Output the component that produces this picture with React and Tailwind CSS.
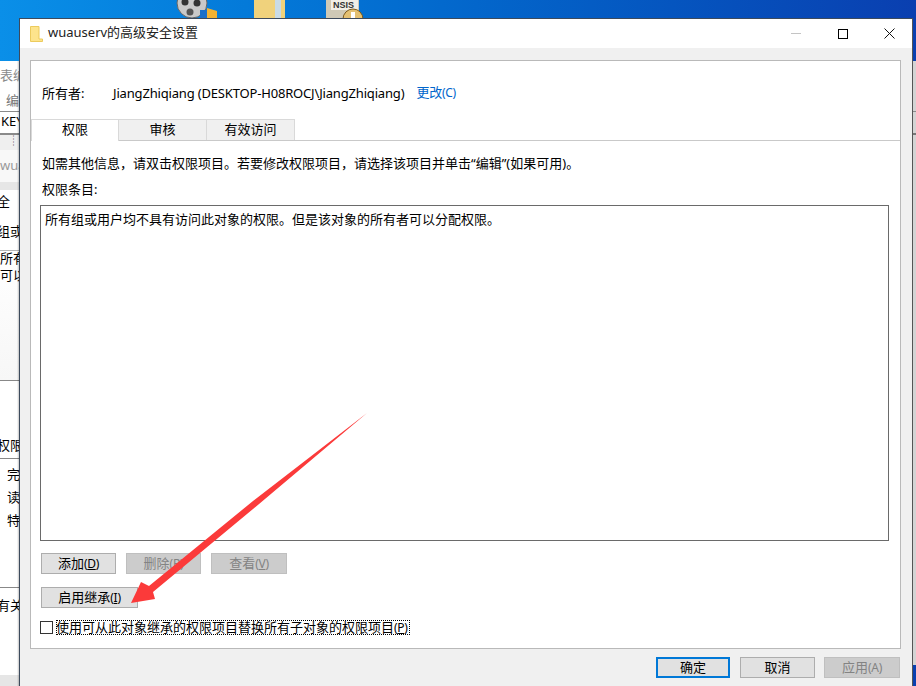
const cjk = { fontFamily: '"Noto Sans", "Noto Sans CJK SC", sans-serif' };

function Btn({ children, className = "", disabled = false }) {
  return (
    <div className={`flex items-center justify-center h-[21px] border text-[13px] leading-none ${disabled ? "bg-[#cccccc] border-[#bfbfbf] text-[#838383]" : "bg-[#e1e1e1] border-[#adadad] text-black"} ${className}`}>
      {children}
    </div>
  );
}

function Key({ k, plain = false }) {
  return (
    <span className="text-[12px] tracking-[-0.3px]">
      (<span className={plain ? "" : "underline underline-offset-1"}>{k}</span>)
    </span>
  );
}

function Tab({ children, active, className = "" }) {
  return (
    <div className={`flex items-center justify-center text-[13px] pb-px ${active ? "h-[22px] bg-white border-t border-l border-r border-[#d9d9d9] relative z-10 w-[88px] -mb-px" : "h-[21px] bg-[#f0f0f0] border-t border-r border-[#d9d9d9] w-[88px]"} ${className}`}>
      {children}
    </div>
  );
}

function BackWindow() {
  return (
    <div className="absolute left-0 top-[61px] w-[20px] h-[625px] bg-white text-[13px] leading-none overflow-hidden whitespace-nowrap text-black">
      <div className="h-[25px] pt-[8px] text-[#8a8a8a]">表编</div>
      <div className="h-[25px] pl-[6px] pt-[8px] text-[#777]">编</div>
      <div className="h-[24px] border-t border-b-2 border-[#8a8a8a] pl-[1px] pt-[3px]">KEY</div>
      <div className="h-[15px] bg-[#efefef] pl-[8px] text-[#555] text-[11px]">┊</div>
      <div className="h-[32px] pt-[9px] text-[#9a9a9a] bg-[#f8f8f8]">wua</div>
      <div className="h-[8px] bg-[#e6e6e6]"></div>
      <div className="h-[60px] flex flex-col justify-start pt-[5px] gap-[17px]">
        <div className="-ml-[3px]">全</div>
        <div className="-ml-[3px]">组或</div>
      </div>
      <div className="h-[130px] border-t border-[#b5b5b5] pt-[1px] flex flex-col gap-[4px] bg-gradient-to-b from-white to-[#f7f7f7]">
        <div>所有</div>
        <div>可以</div>
      </div>
      <div className="h-[78px] border-t border-[#888] pt-[58px]">
        <div className="-ml-[3px]">权限</div>
      </div>
      <div className="h-[129px] border-t border-[#888] pt-[9px] pl-[7px] flex flex-col gap-[10px]">
        <div>完</div>
        <div>读</div>
        <div>特</div>
      </div>
      <div className="h-[88px] border-t border-[#888] pt-[11px]">
        <div className="-ml-[3px]">有关</div>
      </div>
      <div className="h-[11px] bg-[#e6e6e6]"></div>
      <div className="absolute right-0 top-0 bottom-0 w-[3px] bg-gradient-to-r from-transparent to-[#00000055]"></div>
    </div>
  );
}

function DesktopIcons() {
  return (
    <svg className="absolute left-0 top-0" width="400" height="20" viewBox="0 0 400 20">
      <circle cx="192" cy="3" r="15" fill="#c9c9c9" stroke="#666" strokeWidth="1" />
      <circle cx="185" cy="2" r="3.5" fill="#333" />
      <circle cx="197" cy="3" r="3.5" fill="#333" />
      <circle cx="190" cy="12" r="3.5" fill="#555" />
      <rect x="200" y="10" width="7" height="8" fill="#1a6fc9" />
      <path d="M207 8L217 11V18H207Z" fill="#f2b233" />
      <rect x="254" y="0" width="31" height="18" fill="#f0d27c" />
      <rect x="275" y="0" width="6" height="18" fill="#c9dbe6" />
      <rect x="326" y="0" width="33" height="18" fill="#cfc9b6" />
      <rect x="331" y="0" width="27" height="10" fill="#f2efe6" />
      <text x="333" y="8" fontSize="9" fontWeight="700" fill="#333" fontFamily="Liberation Sans, sans-serif">NSIS</text>
      <circle cx="353" cy="19" r="10" fill="#e3c072" stroke="#7c5a1c" />
      <rect x="351" y="12" width="4" height="7" fill="#ffffff" />
    </svg>
  );
}

export default function App() {
  return (
    <div className="relative w-[916px] h-[686px] overflow-hidden bg-gradient-to-r from-[#0a8fe8] to-[#0a3fb0] text-black" style={cjk}>
      <DesktopIcons />
      <BackWindow />
      <div className="absolute right-0 top-[61px] w-[8px] h-[604px] bg-[#d4d4d4] flex flex-col">
        <div className="mt-[50px] h-px bg-[#8a8a8a]"></div>
        <div className="mt-[21px] h-[2px] bg-[#777]"></div>
      </div>
      <div className="absolute left-[19px] top-[18px] w-[894px] h-[668px] bg-[#f0f0f0] border-l border-r border-t border-[#3c4a5c] border-r-[#555] flex flex-col">
        <div className="h-[29px] bg-white flex items-center shrink-0">
          <svg className="ml-[10px]" width="13" height="16" viewBox="0 0 13 16">
            <path d="M0.5 0.5H9V13H12.5V15.5H0.5Z" fill="#fde48c" stroke="#eccb5d" />
          </svg>
          <span className="ml-[5px] pb-[2px] text-[13px] text-[#222]">wuauserv的高级安全设置</span>
          <div className="ml-auto flex items-center h-full">
            <div className="w-[46px] flex justify-center">
              <div className="w-[10px] h-px bg-[#c4c4c4]"></div>
            </div>
            <div className="w-[46px] flex justify-center ml-[1px]">
              <div className="w-[10px] h-[10px] border border-black"></div>
            </div>
            <div className="w-[46px] flex justify-center">
              <svg width="11" height="11" viewBox="0 0 11 11">
                <path d="M0.5 0.5L10.5 10.5M10.5 0.5L0.5 10.5" stroke="#111" strokeWidth="1" />
              </svg>
            </div>
          </div>
        </div>
        <div className="ml-[10px] mr-[11px] mt-[12px] h-[589px] bg-white border border-[#b9b9b9] flex flex-col shrink-0">
          <div className="h-[58px] flex items-end pb-[17px] pl-[11px] text-[13px] leading-[18px] whitespace-nowrap shrink-0">
            <span className="w-[71px]">所有者:</span>
            <span className="tracking-[-0.17px]">JiangZhiqiang (DESKTOP-H08ROCJ\JiangZhiqiang)</span>
            <span className="ml-[12px] text-[#0066cc] tracking-[-0.2px]">更改<span className="text-[12px] tracking-[-0.3px]">(C)</span></span>
          </div>
          <div className="flex items-end border-b border-[#c9c9c9] h-[22px] shrink-0">
            <Tab active>权限</Tab>
            <Tab>审核</Tab>
            <Tab className="border-l-0">有效访问</Tab>
          </div>
          <div className="pl-[11px] mt-[13px] text-[13px] leading-[18px] whitespace-nowrap">
            如需其他信息，请双击权限项目。若要修改权限项目，请选择该项目并单击“编辑”(如果可用)。
          </div>
          <div className="pl-[11px] mt-[8px] text-[13px] leading-[18px]">权限条目:</div>
          <div className="ml-[9px] mr-[11px] mt-[7px] h-[336px] border border-[#6a6a6a] px-[4px] pt-[4px] text-[13px] leading-[18px] shrink-0">
            所有组或用户均不具有访问此对象的权限。但是该对象的所有者可以分配权限。
          </div>
          <div className="flex gap-[10px] ml-[10px] mt-[12px]">
            <Btn className="w-[75px]">添加<Key k="D" /></Btn>
            <Btn disabled className="w-[75px]">删除<Key k="R" /></Btn>
            <Btn disabled className="w-[76px]">查看<Key k="V" /></Btn>
          </div>
          <Btn className="ml-[10px] mt-[13px] w-[97px]">启用继承<Key k="I" /></Btn>
          <div className="flex items-center ml-[9px] mt-[12px]">
            <div className="w-[13px] h-[13px] border border-[#333] bg-white"></div>
            <div className="ml-[3px] h-[15px] w-[354px] border border-dotted border-black flex items-center text-[13px] whitespace-nowrap">
              <span className="-ml-[1px]">使用可从此对象继承的权限项目替换所有子对象的权限项目<Key k="P" /></span>
            </div>
          </div>
        </div>
        <div className="flex mt-[8px] ml-[636px]">
          <Btn className="w-[74px] !border-2 !border-[#0078d7]">确定</Btn>
          <Btn className="w-[75px] ml-[10px]">取消</Btn>
          <Btn disabled className="w-[76px] ml-[9px]">应用<Key k="A" plain /></Btn>
        </div>
      </div>
      <svg className="absolute left-[120px] top-[400px] pointer-events-none" width="260" height="220" viewBox="0 0 260 220">
        <path d="M247 13L133 101L29 186L21 182L11 203L35 199L33 192L133 109Z" fill="#fb3a3a" />
      </svg>
    </div>
  );
}
